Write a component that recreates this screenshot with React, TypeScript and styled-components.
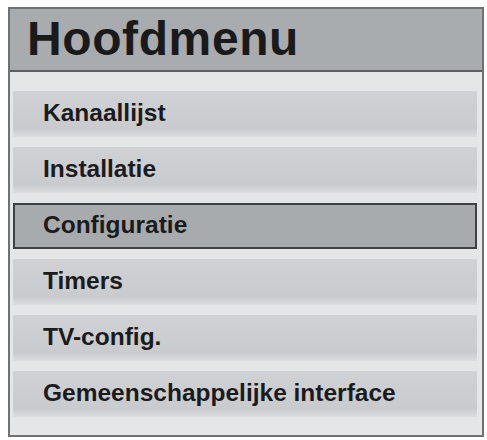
import { FC } from "react";
import { styled, createGlobalStyle } from "styled-components";

const GlobalStyle = createGlobalStyle`
  html, body {
    margin: 0;
    padding: 0;
    background: #ffffff;
  }
  body {
    font-family: "Liberation Sans", Arial, sans-serif;
  }
`;

const items = [
  "Kanaallijst",
  "Installatie",
  "Configuratie",
  "Timers",
  "TV-config.",
  "Gemeenschappelijke interface",
];

const App: FC = () => {
  const selected = 2;
  return (
    <>
      <GlobalStyle />
      <Page>
        <Menu>
          <Header>Hoofdmenu</Header>
          <List>
            {items.map((label, i) => (
              <Item key={label} $active={i === selected}>
                {label}
              </Item>
            ))}
          </List>
        </Menu>
      </Page>
    </>
  );
};

export default App;

const Page = styled.div`
  padding: 7px 3px 3px 8px;
`;

const Menu = styled.div`
  width: 472px;
  height: 426px;
  border: 2px solid #6f7173;
  background: #e4e6e8;
  display: flex;
  flex-direction: column;
`;

const Header = styled.div`
  height: 63px;
  background: #a9acaf;
  border-bottom: 2px solid #5c5e60;
  padding-left: 17px;
  padding-bottom: 2px;
  box-sizing: border-box;
  display: flex;
  align-items: center;
  font-size: 48px;
  font-weight: bold;
  color: #1a1a1a;
  letter-spacing: 0.6px;
`;

const List = styled.div`
  display: flex;
  flex-direction: column;
  gap: 10px;
  padding: 19px 5px 0 3px;
`;

const Item = styled.div<{ $active?: boolean }>`
  height: 46px;
  box-sizing: border-box;
  display: flex;
  align-items: center;
  padding-left: ${(p) => (p.$active ? "28px" : "30px")};
  padding-bottom: 3px;
  font-size: 24.5px;
  font-weight: bold;
  color: #1b1b1b;
  background: ${(p) =>
    p.$active
      ? "#a8abad"
      : "linear-gradient(to bottom, #cfd1d4 0%, #c9cbce 82%, #dcdee0 100%)"};
  border: ${(p) => (p.$active ? "2px solid #3f4143" : "none")};
`;
